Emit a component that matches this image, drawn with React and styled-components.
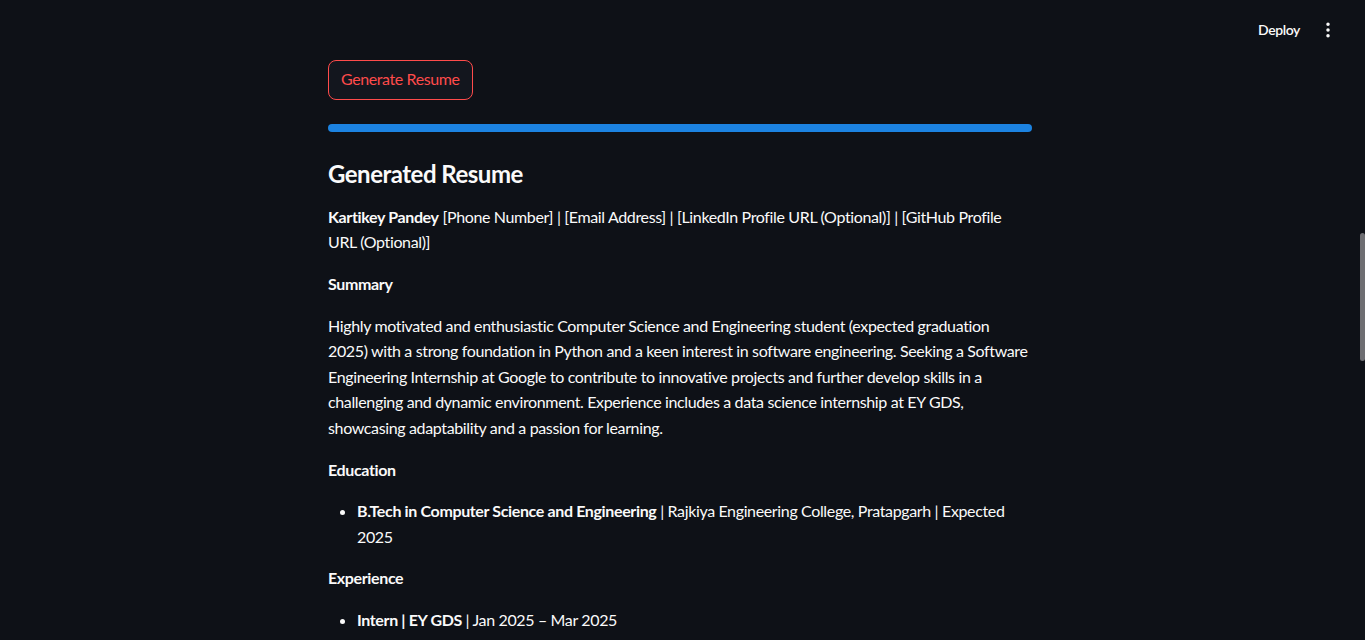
import React from 'react';
import styled, {createGlobalStyle} from 'styled-components';
import {EllipsisVertical} from 'lucide-react';

const GlobalStyle = createGlobalStyle`
    html, body {
        margin: 0;
        padding: 0;
        background: #0e1117;
        overflow: hidden;
    }
    body {
        font-family: Lato, "Noto Sans", sans-serif;
        color: #fafafa;
    }
`

const education = [
    {title: 'B.Tech in Computer Science and Engineering', rest: ' | Rajkiya Engineering College, Pratapgarh | Expected 2025'},
];

const experience = [
    {title: 'Intern | EY GDS', rest: ' | Jan 2025 – Mar 2025'},
];

export const App = () => {
    return <>
        <GlobalStyle/>
        <Header>
            <DeployBtn>Deploy</DeployBtn>
            <MenuBtn><EllipsisVertical size={20} strokeWidth={2.2}/></MenuBtn>
        </Header>
        <Page>
            <Main>
                <GenButton>Generate Resume</GenButton>
                <Progress/>
                <Title>Generated Resume</Title>
                <Para><b>Kartikey Pandey</b> [Phone Number] | [Email Address] | [LinkedIn Profile URL (Optional)] | [GitHub Profile URL (Optional)]</Para>
                <Para><b>Summary</b></Para>
                <Para>
                    Highly motivated and enthusiastic Computer Science and Engineering student (expected graduation 2025) with a strong foundation in Python and a keen interest in software engineering. Seeking a Software Engineering Internship at Google to contribute to innovative projects and further develop skills in a challenging and dynamic environment. Experience includes a data science internship at EY GDS, showcasing adaptability and a passion for learning.
                </Para>
                <Para><b>Education</b></Para>
                <List>
                    {education.map((e, i) => <li key={i}><b>{e.title}</b>{e.rest}</li>)}
                </List>
                <Para><b>Experience</b></Para>
                <List>
                    {experience.map((e, i) => <li key={i}><b>{e.title}</b>{e.rest}</li>)}
                </List>
            </Main>
        </Page>
        <ScrollThumb/>
    </>
}

export default App;

const Header = styled.div`
    height: 60px;
    display: flex;
    justify-content: flex-end;
    align-items: center;
    gap: 18px;
    padding-right: 27px;
`

const DeployBtn = styled.div`
    font-size: 14px;
    font-weight: 600;
    letter-spacing: -0.4px;
    color: #fafafa;
    padding-bottom: 1px;
`

const MenuBtn = styled.div`
    display: flex;
    color: #fafafa;
`

const Page = styled.div`
    display: flex;
    justify-content: center;
    padding-right: 5px;
`

const Main = styled.div`
    width: 704px;
    display: flex;
    flex-direction: column;
    align-items: flex-start;
    font-size: 16px;
    line-height: 1.6;
    letter-spacing: -0.36px;
    b { font-weight: 700; }
`

const GenButton = styled.button`
    height: 40px;
    padding: 0 12px 3px;
    border: 1px solid #ff4b4b;
    border-radius: 8px;
    background: #13161e;
    color: #ff4b4b;
    font-family: inherit;
    font-size: 16px;
    letter-spacing: -0.4px;
`

const Progress = styled.div`
    width: 100%;
    height: 8px;
    margin-top: 24px;
    border-radius: 4px;
    background: #1c83e1;
`

const Title = styled.h3`
    margin: 28px 0 15px;
    font-size: 24px;
    font-weight: 700;
    line-height: 1.2;
    letter-spacing: -0.5px;
`

const Para = styled.p`
    margin: 0 0 16px;
`

const List = styled.ul`
    margin: 0 0 16px;
    padding-left: 29px;
`

const ScrollThumb = styled.div`
    position: fixed;
    right: 0;
    top: 233px;
    width: 5px;
    height: 128px;
    border-radius: 3px;
    background: #6e6e72;
`
